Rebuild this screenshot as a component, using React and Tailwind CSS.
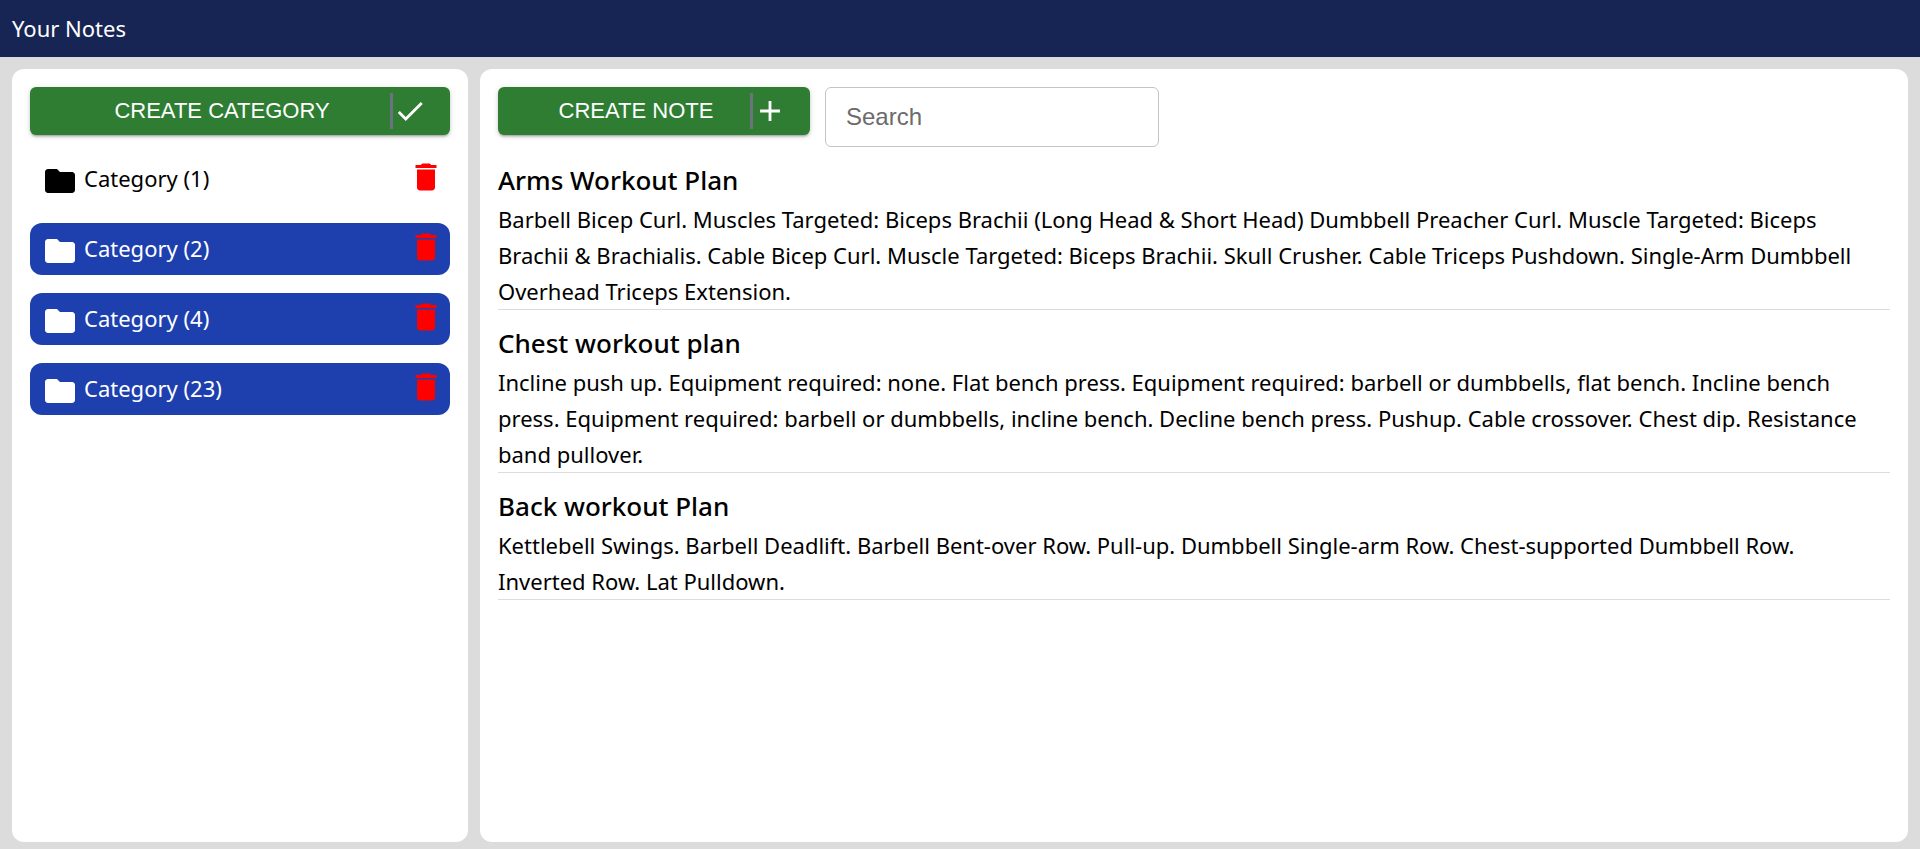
import { MdAdd, MdCheck, MdDelete, MdFolder } from "react-icons/md";

const categories = [
  { id: 1, label: "Category (1)", selected: true },
  { id: 2, label: "Category (2)", selected: false },
  { id: 3, label: "Category (4)", selected: false },
  { id: 4, label: "Category (23)", selected: false },
];

const notes = [
  {
    title: "Arms Workout Plan",
    body: "Barbell Bicep Curl. Muscles Targeted: Biceps Brachii (Long Head & Short Head) Dumbbell Preacher Curl. Muscle Targeted: Biceps Brachii & Brachialis. Cable Bicep Curl. Muscle Targeted: Biceps Brachii. Skull Crusher. Cable Triceps Pushdown. Single-Arm Dumbbell Overhead Triceps Extension.",
  },
  {
    title: "Chest workout plan",
    body: "Incline push up. Equipment required: none. Flat bench press. Equipment required: barbell or dumbbells, flat bench. Incline bench press. Equipment required: barbell or dumbbells, incline bench. Decline bench press. Pushup. Cable crossover. Chest dip. Resistance band pullover.",
  },
  {
    title: "Back workout Plan",
    body: "Kettlebell Swings. Barbell Deadlift. Barbell Bent-over Row. Pull-up. Dumbbell Single-arm Row. Chest-supported Dumbbell Row. Inverted Row. Lat Pulldown.",
  },
];

function ActionButton({ label, icon: Icon, className }) {
  return (
    <button
      type="button"
      className={`flex h-12 items-center rounded-md bg-[#2e7d32] pl-6 pr-[23px] font-['Liberation_Sans',Arial,sans-serif] text-[22px] leading-9 text-white shadow-[0_3px_2px_-2px_rgba(0,0,0,0.2),0_2px_3px_0_rgba(0,0,0,0.14),0_1px_6px_0_rgba(0,0,0,0.12)] ${className}`}
    >
      <span className="flex-1 whitespace-nowrap text-center">{label}</span>
      <span className="flex h-9 items-center border-l-3 border-[#6b7280]">
        <Icon className="size-[34px]" aria-hidden="true" />
      </span>
    </button>
  );
}

function CategoryItem({ label, selected }) {
  return (
    <li
      className={`flex h-13 items-start justify-between rounded-xl pl-3 pr-1.5 ${
        selected ? "bg-white text-black" : "bg-[#1e40af] text-white"
      }`}
    >
      <a href="#notes" className="flex items-start gap-1.5 pt-[7px]">
        <MdFolder className="mt-[3px] size-9" aria-hidden="true" />
        <span>{label}</span>
      </a>
      <button type="button" aria-label={`Delete ${label}`} className="pt-1.5 text-[#ff0000]">
        <MdDelete className="size-9" aria-hidden="true" />
      </button>
    </li>
  );
}

export default function App() {
  return (
    <div className="flex min-h-screen flex-col bg-[#dcdcdc] font-['Noto_Sans','Open_Sans',sans-serif] text-[22px] leading-9 text-black">
      <header className="flex h-[57px] items-start bg-[#172554] px-3 pt-2.5 text-white">
        <h1>Your Notes</h1>
      </header>
      <div className="flex flex-1 pt-3 pb-[7px]">
        <aside className="flex w-1/4 px-3">
          <div className="flex flex-1 flex-col gap-4.5 rounded-xl bg-white p-4.5">
            <ActionButton label="CREATE CATEGORY" icon={MdCheck} className="w-full" />
            <ul className="flex flex-col gap-4.5">
              {categories.map((category) => (
                <CategoryItem key={category.id} {...category} />
              ))}
            </ul>
          </div>
        </aside>
        <main className="flex w-3/4 pr-3">
          <div className="flex min-w-0 flex-1 flex-col gap-3 rounded-xl bg-white p-4.5">
            <div className="flex items-start gap-[15px]">
              <ActionButton label="CREATE NOTE" icon={MdAdd} className="w-78" />
              <input
                type="search"
                aria-label="Search"
                placeholder="Search"
                className="h-15 w-[334px] rounded-md border border-[#c4c4c4] px-5 font-['Liberation_Sans',Arial,sans-serif] text-2xl placeholder:text-[#6b6b6b]"
              />
            </div>
            <div id="notes" className="flex flex-col gap-3">
              {notes.map((note) => (
                <article key={note.title} className="border-b border-[#dcdcdc]">
                  <h2 className="text-[26px] font-medium leading-[42px]">{note.title}</h2>
                  <p className="pr-2">{note.body}</p>
                </article>
              ))}
            </div>
          </div>
        </main>
      </div>
    </div>
  );
}
